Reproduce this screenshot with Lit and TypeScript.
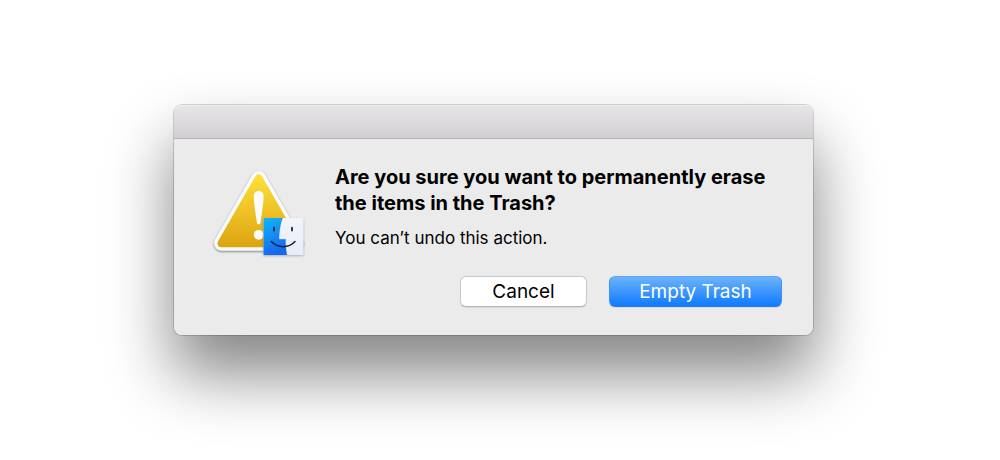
import { LitElement, html, css } from "lit";
import { customElement } from "lit/decorators.js";

@customElement("alert-icon")
class AlertIcon extends LitElement {
  static styles = css`
    :host { display: block; }
    .art { display: block; width: 96px; height: 96px; overflow: visible; }
    .sticker { filter: drop-shadow(0 1px 1px rgba(0, 0, 0, 0.45)); }
    .badge { filter: drop-shadow(0 1px 1px rgba(0, 0, 0, 0.25)); }
  `;

  render() {
    return html`
      <svg class="art" viewBox="0 -1 96 96" aria-hidden="true">
        <defs>
          <linearGradient id="yellow" gradientUnits="userSpaceOnUse" x1="0" y1="10" x2="0" y2="83">
            <stop offset="0" stop-color="#fde03c" />
            <stop offset="0.5" stop-color="#eec224" />
            <stop offset="1" stop-color="#dca30f" />
          </linearGradient>
          <linearGradient id="blue" x1="0" y1="0" x2="0.3" y2="1">
            <stop offset="0" stop-color="#12b6fa" />
            <stop offset="1" stop-color="#1668ee" />
          </linearGradient>
          <linearGradient id="pale" x1="0" y1="0" x2="0" y2="1">
            <stop offset="0" stop-color="#f2f4f8" />
            <stop offset="1" stop-color="#e5eefa" />
          </linearGradient>
        </defs>
        <path class="sticker" d="M48.7 13.5 L85.9 78.3 H11.5 Z" fill="#fbfbfb" stroke="#fbfbfb" stroke-width="15" stroke-linejoin="round" />
        <path d="M48.7 13.5 L85.9 78.3 H11.5 Z" fill="url(#yellow)" stroke="url(#yellow)" stroke-width="8" stroke-linejoin="round" />
        <path d="M43.8 30.8 C43.8 24.4 53.6 24.4 53.6 30.8 C53.6 39 51.6 49 50.6 57.4 C50.2 60 47.2 60 46.8 57.4 C45.8 49 43.8 39 43.8 30.8 Z" fill="#fbfbfb" />
        <circle cx="48.7" cy="69.8" r="4.9" fill="#fbfbfb" />
        <g class="badge">
          <rect x="53.5" y="53" width="40" height="37" rx="1" fill="url(#pale)" />
          <path d="M54.5 53 H72.6 C70.6 58 69.2 66 69 74.2 H75.6 C75.4 79 75.9 85 77 90 H54.5 Q53.5 90 53.5 89 V54 Q53.5 53 54.5 53 Z" fill="url(#blue)" />
        </g>
        <path d="M72.6 53 C70.6 58 69.2 66 69 74.2 H75.6 C75.4 79 75.9 85 77 90" fill="none" stroke="#1c4f8f" stroke-opacity="0.4" stroke-width="0.5" />
        <path d="M64 62.6 V65.6 M82 62.6 V65.6" stroke="#142236" stroke-width="1.7" stroke-linecap="round" />
        <path d="M61.4 76.6 C67.5 83.4 79 83.4 85 76.6" fill="none" stroke="#142236" stroke-width="1.5" stroke-linecap="round" />
      </svg>
    `;
  }
}

@customElement("app-root")
class AppRoot extends LitElement {
  static styles = css`
    :host {
      display: grid;
      grid-template-columns: minmax(16px, 173fr) minmax(0, 641fr) minmax(16px, 186fr);
      box-sizing: border-box;
      min-height: 100vh;
      padding: 104px 0;
      align-content: start;
      background: #fff;
      color: #000;
      font-family: Inter, "Liberation Sans", sans-serif;
    }
    .dialog {
      grid-column: 2;
      border: 1px solid rgba(0, 0, 0, 0.16);
      border-radius: 9px;
      background: #ebebeb;
      background-clip: padding-box;
      box-shadow: 0 38px 64px rgba(0, 0, 0, 0.48);
    }
    .titlebar {
      box-sizing: border-box;
      height: 34px;
      border-bottom: 1px solid #b5b3b5;
      border-radius: 8px 8px 0 0;
      background: linear-gradient(#e8e5e8, #d1cfd2);
      box-shadow: inset 0 1px #f0eef0;
    }
    .content {
      display: grid;
      grid-template-columns: auto minmax(0, 1fr);
      column-gap: 29px;
      padding: 25px 31px 28px 36px;
    }
    .title {
      margin: 0;
      font-size: 20px;
      line-height: 26px;
      font-weight: 700;
    }
    .detail {
      margin: 10px 0 0;
      font-size: 17px;
      line-height: 24px;
    }
    .actions {
      grid-column: 1 / -1;
      display: flex;
      justify-content: flex-end;
      gap: 22px;
      margin-top: 16px;
    }
    .button {
      box-sizing: border-box;
      height: 31px;
      padding: 0 28px;
      border: 1px solid #c9c9c9;
      border-bottom-color: #b4b4b4;
      border-radius: 6px;
      background: #fff;
      color: #000;
      font: 400 19px/29px Inter, "Liberation Sans", sans-serif;
      box-shadow: 0 1px 1px rgba(0, 0, 0, 0.08);
    }
    .cancel { min-width: 127px; }
    .primary {
      min-width: 173px;
      border-color: #5ba6f8 #3f90f8 #2a78f0;
      background: linear-gradient(#6bb3fa, #0f7aff);
      color: #fff;
    }
  `;

  render() {
    return html`
      <section class="dialog" role="alertdialog" aria-labelledby="title" aria-describedby="detail">
        <div class="titlebar"></div>
        <div class="content">
          <alert-icon></alert-icon>
          <div>
            <h1 class="title" id="title">Are you sure you want to permanently erase the items in the Trash?</h1>
            <p class="detail" id="detail">You can’t undo this action.</p>
          </div>
          <div class="actions">
            <button class="button cancel" type="button">Cancel</button>
            <button class="button primary" type="button">Empty Trash</button>
          </div>
        </div>
      </section>
    `;
  }
}
